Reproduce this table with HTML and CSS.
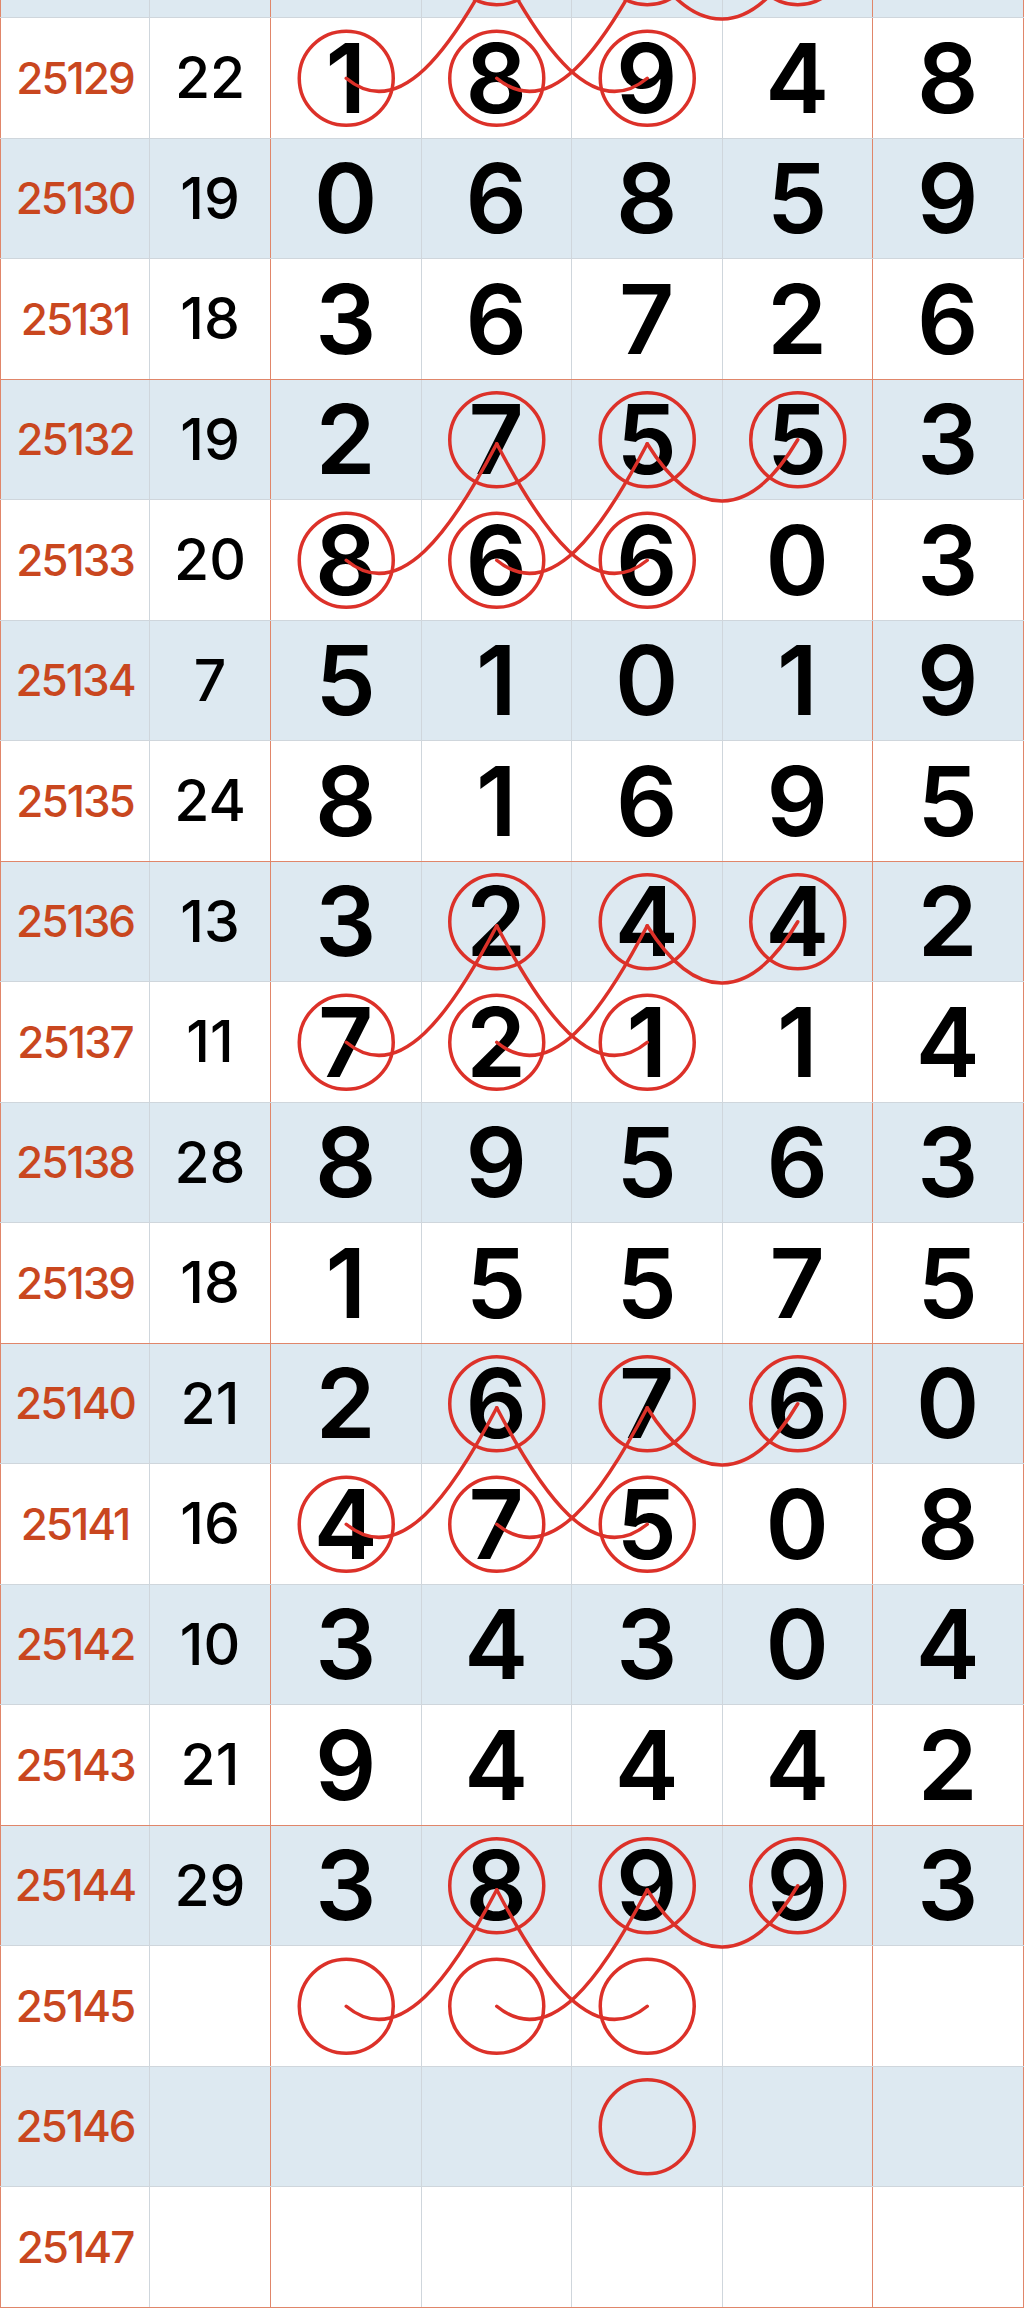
FILE: index.html
```html
<!DOCTYPE html>
<html lang="zh">
<head>
  <meta charset="UTF-8">
  <meta name="viewport" content="width=device-width, initial-scale=1.0">
  <title>走势图</title>
  <link rel="stylesheet" href="styles.css">
</head>
<body>
  <div class="sheet">
    <div class="table">
      <!-- previous issue, scrolled mostly out of view -->
      <div class="row shade"><div class="issue"></div><div class="sum"></div><div class="d"></div><div class="d"></div><div class="d"></div><div class="d"></div><div class="d"></div></div>
      <div class="row"><div class="issue">25129</div><div class="sum">22</div><div class="d">1</div><div class="d">8</div><div class="d">9</div><div class="d">4</div><div class="d">8</div></div>
      <div class="row shade"><div class="issue">25130</div><div class="sum">19</div><div class="d">0</div><div class="d">6</div><div class="d">8</div><div class="d">5</div><div class="d">9</div></div>
      <div class="row sep"><div class="issue">25131</div><div class="sum">18</div><div class="d">3</div><div class="d">6</div><div class="d">7</div><div class="d">2</div><div class="d">6</div></div>
      <div class="row shade"><div class="issue">25132</div><div class="sum">19</div><div class="d">2</div><div class="d">7</div><div class="d">5</div><div class="d">5</div><div class="d">3</div></div>
      <div class="row"><div class="issue">25133</div><div class="sum">20</div><div class="d">8</div><div class="d">6</div><div class="d">6</div><div class="d">0</div><div class="d">3</div></div>
      <div class="row shade"><div class="issue">25134</div><div class="sum">7</div><div class="d">5</div><div class="d">1</div><div class="d">0</div><div class="d">1</div><div class="d">9</div></div>
      <div class="row sep"><div class="issue">25135</div><div class="sum">24</div><div class="d">8</div><div class="d">1</div><div class="d">6</div><div class="d">9</div><div class="d">5</div></div>
      <div class="row shade"><div class="issue">25136</div><div class="sum">13</div><div class="d">3</div><div class="d">2</div><div class="d">4</div><div class="d">4</div><div class="d">2</div></div>
      <div class="row"><div class="issue">25137</div><div class="sum">11</div><div class="d">7</div><div class="d">2</div><div class="d">1</div><div class="d">1</div><div class="d">4</div></div>
      <div class="row shade"><div class="issue">25138</div><div class="sum">28</div><div class="d">8</div><div class="d">9</div><div class="d">5</div><div class="d">6</div><div class="d">3</div></div>
      <div class="row sep"><div class="issue">25139</div><div class="sum">18</div><div class="d">1</div><div class="d">5</div><div class="d">5</div><div class="d">7</div><div class="d">5</div></div>
      <div class="row shade"><div class="issue">25140</div><div class="sum">21</div><div class="d">2</div><div class="d">6</div><div class="d">7</div><div class="d">6</div><div class="d">0</div></div>
      <div class="row"><div class="issue">25141</div><div class="sum">16</div><div class="d">4</div><div class="d">7</div><div class="d">5</div><div class="d">0</div><div class="d">8</div></div>
      <div class="row shade"><div class="issue">25142</div><div class="sum">10</div><div class="d">3</div><div class="d">4</div><div class="d">3</div><div class="d">0</div><div class="d">4</div></div>
      <div class="row sep"><div class="issue">25143</div><div class="sum">21</div><div class="d">9</div><div class="d">4</div><div class="d">4</div><div class="d">4</div><div class="d">2</div></div>
      <div class="row shade"><div class="issue">25144</div><div class="sum">29</div><div class="d">3</div><div class="d">8</div><div class="d">9</div><div class="d">9</div><div class="d">3</div></div>
      <div class="row"><div class="issue">25145</div><div class="sum"></div><div class="d"></div><div class="d"></div><div class="d"></div><div class="d"></div><div class="d"></div></div>
      <div class="row shade"><div class="issue">25146</div><div class="sum"></div><div class="d"></div><div class="d"></div><div class="d"></div><div class="d"></div><div class="d"></div></div>
      <div class="row sep"><div class="issue">25147</div><div class="sum"></div><div class="d"></div><div class="d"></div><div class="d"></div><div class="d"></div><div class="d"></div></div>
    </div>

    <!-- hand drawn marks, y = centre of the upper row of each pair -->
    <svg class="marks" width="1024" height="2308" viewBox="0 0 1024 2308">
      <defs>
        <g id="loop">
          <circle cx="496.75" cy="0" r="47"/>
          <circle cx="647.25" cy="0" r="47"/>
          <circle cx="797.75" cy="0" r="47"/>
          <circle cx="346.25" cy="120.5" r="47"/>
          <circle cx="496.75" cy="120.5" r="47"/>
          <circle cx="647.25" cy="120.5" r="47"/>
          <path d="M496.75 4 C451.75 90 399.75 165 346.25 120.5"/>
          <path d="M496.75 4 C541.75 90 593.75 165 647.25 120.5"/>
          <path d="M647.25 4 C602.25 90 550.25 165 496.75 120.5"/>
          <path d="M647.25 4 C695 81 750 81 797.75 0"/>
        </g>
      </defs>
      <use href="#loop" y="-42.25"/>
      <use href="#loop" y="439.75"/>
      <use href="#loop" y="921.75"/>
      <use href="#loop" y="1403.75"/>
      <use href="#loop" y="1885.75"/>
      <circle cx="647.25" cy="2126.75" r="47"/>
    </svg>
  </div>
</body>
</html>
```

FILE: styles.css
```css
* {
  box-sizing: border-box;
}
body {
  margin: 0;
  background: #fff;
}
.sheet {
  position: relative;
  height: 2308px;
  overflow: hidden;
  font-family: Inter, "Noto Sans", sans-serif;
  color: #000;
}
.table {
  margin-top: -102.5px;
}
.row {
  display: grid;
  grid-template-columns: 150px 121px repeat(5, 150.5px);
  height: 120.5px;
  border-bottom: 1px solid #cfd6dc;
}
.row.shade {
  background: #dde9f1;
}
.row.sep {
  border-bottom-color: #e0866a;
}
.row > div {
  display: flex;
  align-items: center;
  justify-content: center;
  line-height: 1;
  border-right: 1px solid #cfd6dc;
}
.row > .issue {
  border-left: 1px solid #e0866a;
  color: #c9471f;
  font-size: 44px;
  font-weight: 500;
  letter-spacing: -2px;
}
.row > .sum {
  border-right-color: #e0866a;
  font-size: 57px;
  font-weight: 500;
}
.row > .d {
  font-size: 96px;
  font-weight: 600;
}
.row > .d:nth-child(6),
.row > .d:nth-child(7) {
  border-right-color: #e0866a;
}
.marks {
  position: absolute;
  top: 0;
  left: 0;
  fill: none;
  stroke: #dc3129;
  stroke-width: 3.5;
  stroke-linecap: round;
}
```
